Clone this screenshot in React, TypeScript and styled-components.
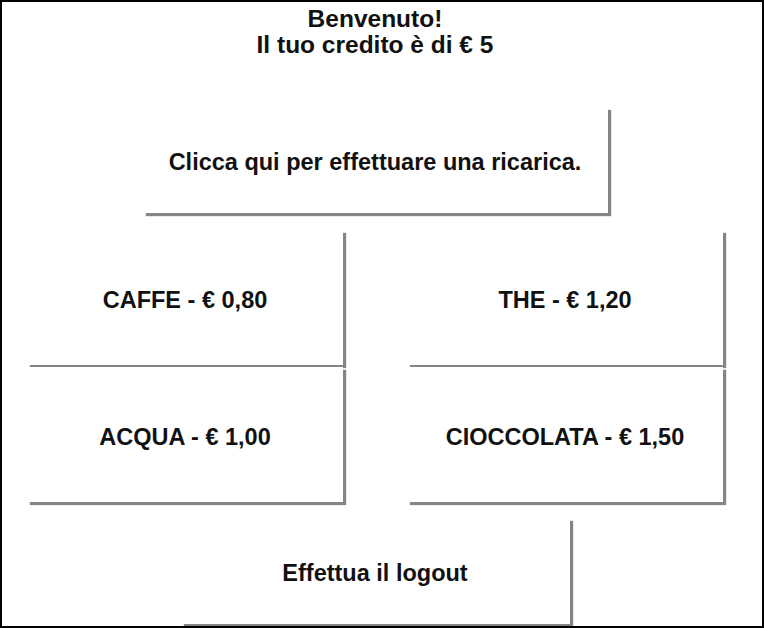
import React from "react";
import styled, { createGlobalStyle } from "styled-components";

const GlobalStyle = createGlobalStyle`
  html, body {
    margin: 0;
    padding: 0;
    background: #ffffff;
  }
  body {
    font-family: "Liberation Sans", Arial, sans-serif;
  }
`;

const Frame = styled.div`
  box-sizing: border-box;
  width: 764px;
  height: 628px;
  border: 2px solid #000;
  background: #fff;
  overflow: hidden;
  display: flex;
  flex-direction: column;
  align-items: center;
  padding-right: 14px;
`;

const Heading = styled.div`
  margin-top: 4px;
  text-align: center;
  font-weight: bold;
  font-size: 24.5px;
  line-height: 26px;
  color: #111;
`;

const Button = styled.button<{ $w: number; $h: number }>`
  box-sizing: border-box;
  width: ${(p) => p.$w}px;
  height: ${(p) => p.$h}px;
  border: none;
  margin: 0;
  padding: 5px 0 0 0;
  background: #fff;
  box-shadow: 3px 3px 1px #858585;
  font-family: "Liberation Sans", Arial, sans-serif;
  font-weight: bold;
  font-size: 23.5px;
  color: #111;
  cursor: pointer;
  display: flex;
  align-items: center;
  justify-content: center;
`;

const Section = styled.div<{ $top: number }>`
  margin-top: ${(p) => p.$top}px;
  display: flex;
  justify-content: center;
`;

const Grid = styled.div`
  margin-top: 17px;
  display: grid;
  grid-template-columns: 316px 316px;
  column-gap: 64px;
  row-gap: 2px;
`;

const items = [
  "CAFFE - € 0,80",
  "THE - € 1,20",
  "ACQUA - € 1,00",
  "CIOCCOLATA - € 1,50",
];

export default function App() {
  return (
    <>
      <GlobalStyle />
      <Frame>
        <Heading>
          Benvenuto!
          <br />
          Il tuo credito è di € 5
        </Heading>
        <Section $top={49}>
          <Button $w={465} $h={106}>Clicca qui per effettuare una ricarica.</Button>
        </Section>
        <Grid>
          {items.map((t) => (
            <Button key={t} $w={316} $h={135}>
              {t}
            </Button>
          ))}
        </Grid>
        <Section $top={16}>
          <Button $w={389} $h={106}>Effettua il logout</Button>
        </Section>
      </Frame>
    </>
  );
}
